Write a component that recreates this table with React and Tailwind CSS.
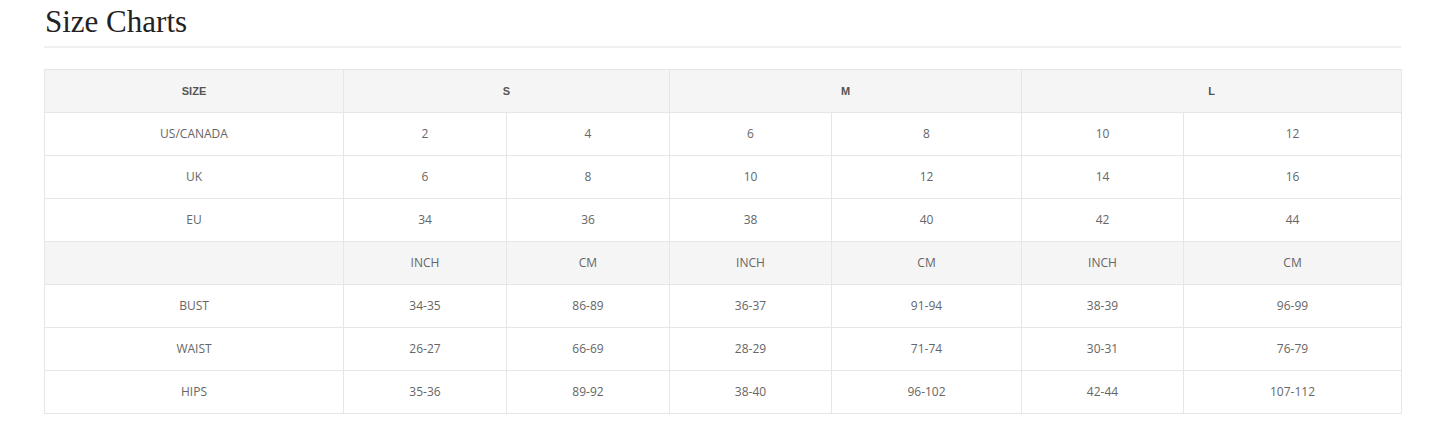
import React from "react";

const rows = [
  { label: "US/CANADA", vals: ["2", "4", "6", "8", "10", "12"] },
  { label: "UK", vals: ["6", "8", "10", "12", "14", "16"] },
  { label: "EU", vals: ["34", "36", "38", "40", "42", "44"] },
  { label: "", vals: ["INCH", "CM", "INCH", "CM", "INCH", "CM"], gray: true },
  { label: "BUST", vals: ["34-35", "86-89", "36-37", "91-94", "38-39", "96-99"] },
  { label: "WAIST", vals: ["26-27", "66-69", "28-29", "71-74", "30-31", "76-79"] },
  { label: "HIPS", vals: ["35-36", "89-92", "38-40", "96-102", "42-44", "107-112"] },
];

export default function App() {
  return (
    <div className="bg-white w-[1445px] h-[423px] pl-[44px] pt-[3px]">
      <div className="w-[1357px]">
        <h2
          className="text-[31px] leading-[38px] text-[#222] pl-[1px] pb-[5px] border-b-2 border-[#f0f0f0]"
          style={{ fontFamily: '"Liberation Serif", "DejaVu Serif", serif' }}
        >
          Size Charts
        </h2>
        <table className="mt-[21px] w-[1357px] table-fixed border-collapse border border-[#e6e6e6]">
          <colgroup>
            <col className="w-[299px]" />
            <col className="w-[163px]" />
            <col className="w-[163px]" />
            <col className="w-[162px]" />
            <col className="w-[190px]" />
            <col className="w-[162px]" />
            <col className="w-[218px]" />
          </colgroup>
          <thead>
            <tr
              className="h-[43px] bg-[#f5f5f5] text-[11px] font-bold text-[#555]"
              style={{ fontFamily: '"Liberation Sans", Arial, sans-serif' }}
            >
              <th className="border border-[#e6e6e6] font-bold">SIZE</th>
              <th colSpan={2} className="border border-[#e6e6e6] font-bold">S</th>
              <th colSpan={2} className="border border-[#e6e6e6] font-bold">M</th>
              <th colSpan={2} className="border border-[#e6e6e6] font-bold">L</th>
            </tr>
          </thead>
          <tbody
            className="text-[12px] text-[#666]"
            style={{ fontFamily: '"Open Sans", "Noto Sans", sans-serif' }}
          >
            {rows.map((r, i) => (
              <tr key={i} className={r.gray ? "h-[43px] bg-[#f5f5f5]" : "h-[43px] bg-white"}>
                <td className="border border-[#e6e6e6] text-center">{r.label}</td>
                {r.vals.map((v, j) => (
                  <td key={j} className="border border-[#e6e6e6] text-center">{v}</td>
                ))}
              </tr>
            ))}
          </tbody>
        </table>
      </div>
    </div>
  );
}
